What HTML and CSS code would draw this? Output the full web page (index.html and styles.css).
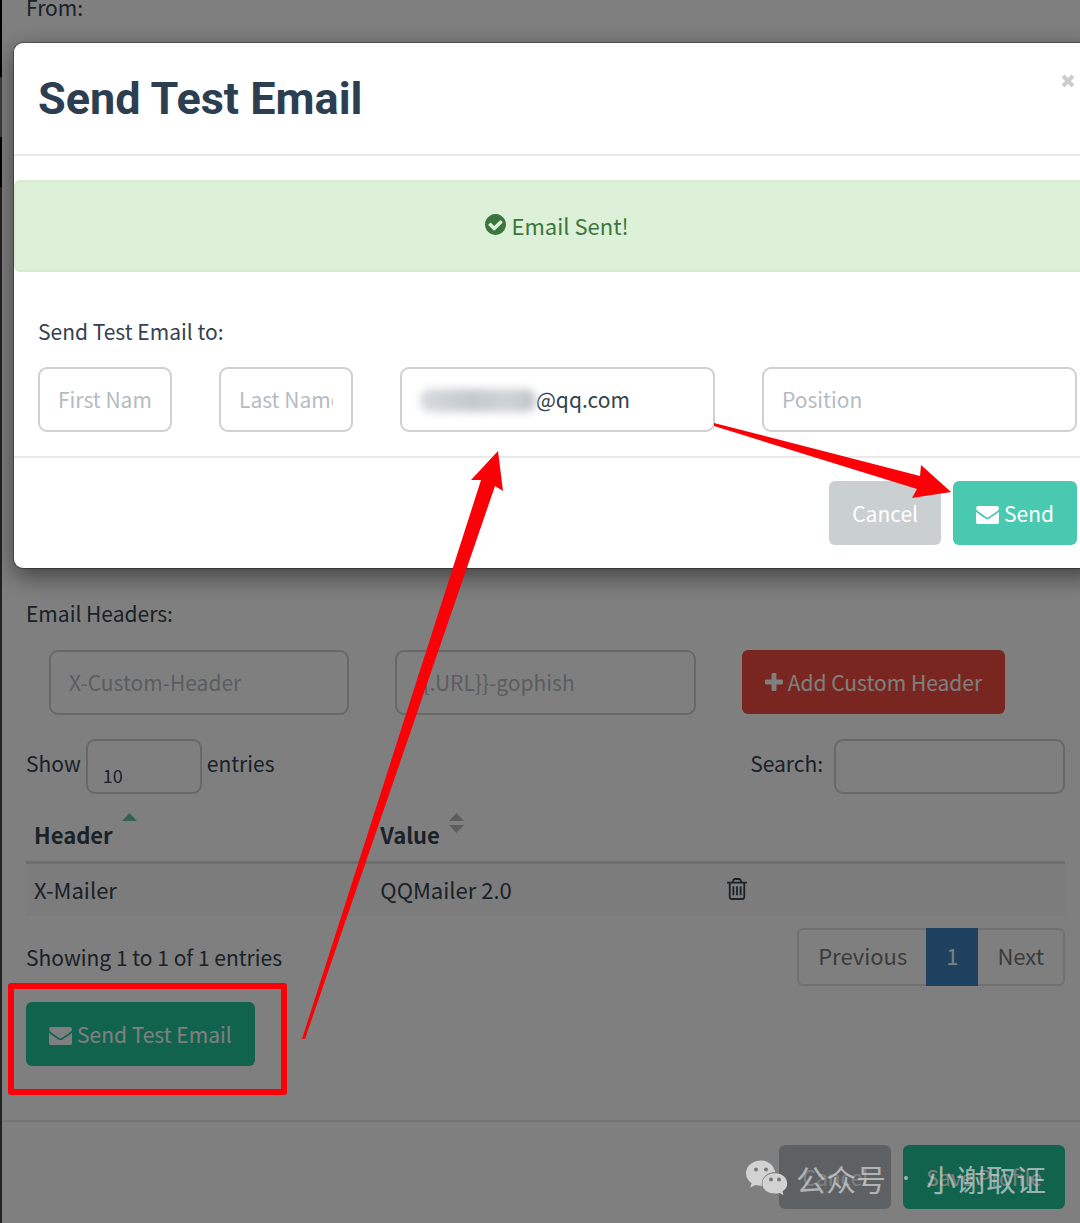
FILE: index.html
```html
<!DOCTYPE html>
<html lang="en">
<head>
    <meta charset="UTF-8">
    <meta name="viewport" content="width=device-width, initial-scale=1.0">
    <title>Send Test Email</title>
    <link rel="stylesheet" href="styles.css">
</head>
<body>
    <svg width="0" height="0" class="icon-defs">
        <symbol id="icon-envelope" viewBox="0 256 1792 1408">
            <path d="M1792 710v794q0 66-47 113t-113 47h-1472q-66 0-113-47t-47-113v-794q44 49 101 87 362 246 497 345 57 42 92.500 65.500t94.500 48 110 24.500h2q51 0 110-24.500t94.500-48 92.500-65.500q170-123 498-345 57-39 100-87zm0-294q0 79-49 151t-122 123q-376 261-468 325-10 7-42.500 31t-54 38.500-52 32.500-57.500 27-50 9h-2q-23 0-50-9t-57.500-27-52-32.500-54-38.500-42.500-31q-91-64-262-182.500t-205-142.500q-62-42-117-115.500t-55-136.500q0-78 41.500-130t118.500-52h1472q65 0 112.500 47t47.500 113z"/>
        </symbol>
    </svg>

    <main class="profile">
        <p class="from-label">From:</p>

        <form class="headers-form">
            <h2 class="group-label">Email Headers:</h2>
            <div class="header-row">
                <div class="col"><input type="text" class="form-control" placeholder="X-Custom-Header" aria-label="Header"></div>
                <div class="col"><input type="text" class="form-control" placeholder="{{.URL}}-gophish" aria-label="Value"></div>
                <div class="col">
                    <button type="button" class="btn btn-danger">
                        <svg class="icon-plus" viewBox="192 128 1408 1408"><path d="M1600 736v192q0 40-28 68t-68 28h-416v416q0 40-28 68t-68 28h-192q-40 0-68-28t-28-68v-416h-416q-40 0-68-28t-28-68v-192q0-40 28-68t68-28h416v-416q0-40 28-68t68-28h192q40 0 68 28t28 68v416h416q40 0 68 28t28 68z"/></svg>
                        Add Custom Header
                    </button>
                </div>
            </div>
        </form>

        <div class="table-tools">
            <label class="length">Show
                <select class="form-control small"><option>10</option></select>
                entries
            </label>
            <label class="search">Search: <input type="search" class="form-control small"></label>
        </div>

        <table class="headers-table">
            <thead>
                <tr>
                    <th>Header <svg class="sort" viewBox="0 0 15 20"><path class="active" d="M0 8L7.500 0L15 8z"/></svg></th>
                    <th>Value <svg class="sort" viewBox="0 0 15 20"><path d="M0 8L7.500 0L15 8zM0 12L7.500 20L15 12z"/></svg></th>
                    <th></th>
                </tr>
            </thead>
            <tbody>
                <tr>
                    <td>X-Mailer</td>
                    <td>QQMailer 2.0</td>
                    <td>
                        <button type="button" class="delete" aria-label="Delete">
                            <svg class="icon-trash" viewBox="192 128 1408 1536"><path d="M704 736v576q0 14-9 23t-23 9h-64q-14 0-23-9t-9-23v-576q0-14 9-23t23-9h64q14 0 23 9t9 23zm256 0v576q0 14-9 23t-23 9h-64q-14 0-23-9t-9-23v-576q0-14 9-23t23-9h64q14 0 23 9t9 23zm256 0v576q0 14-9 23t-23 9h-64q-14 0-23-9t-9-23v-576q0-14 9-23t23-9h64q14 0 23 9t9 23zm128 724v-948h-896v948q0 22 7 40.500t14.500 27 10.500 8.500h832q3 0 10.500-8.500t14.500-27 7-40.500zm-672-1076h448l-48-117q-7-9-17-11h-317q-10 2-17 11zm928 32v64q0 14-9 23t-23 9h-96v948q0 83-47 143.500t-113 60.500h-832q-66 0-113-58.500t-47-141.500v-952h-96q-14 0-23-9t-9-23v-64q0-14 9-23t23-9h309l70-167q15-37 54-63t79-26h320q40 0 79 26t54 63l70 167h309q14 0 23 9t9 23z"/></svg>
                        </button>
                    </td>
                </tr>
            </tbody>
        </table>

        <div class="table-footer">
            <span>Showing 1 to 1 of 1 entries</span>
            <nav class="pagination">
                <a href="#">Previous</a>
                <a href="#" class="current">1</a>
                <a href="#">Next</a>
            </nav>
        </div>

        <div class="test-email">
            <button type="button" class="btn btn-primary">
                <svg class="icon-envelope"><use href="#icon-envelope"/></svg>
                Send Test Email
            </button>
        </div>

        <footer class="profile-footer">
            <button type="button" class="btn btn-default">Cancel</button>
            <button type="button" class="btn btn-primary">Save Profile</button>
        </footer>
    </main>

    <div class="backdrop"></div>

    <div class="dialog" role="dialog" aria-labelledby="dialog-title">
        <div class="dialog-header">
            <h1 id="dialog-title">Send Test Email</h1>
            <button type="button" class="close" aria-label="Close">
                <svg viewBox="0 0 14 14"><path d="M2 2L12 12M12 2L2 12"/></svg>
            </button>
        </div>
        <div class="alert">
            <svg class="icon-check" viewBox="128 128 1536 1536"><path d="M1412 734q0-28-18-46l-91-90q-19-19-45-19t-45 19l-408 407-226-226q-19-19-45-19t-45 19l-91 90q-18 18-18 46 0 27 18 45l362 362q19 19 45 19 27 0 46-19l543-543q18-18 18-45zm252 162q0 209-103 385.500t-279.500 279.500-385.500 103-385.500-103-279.500-279.500-103-385.500 103-385.500 279.500-279.500 385.500-103 385.500 103 279.500 279.500 103 385.500z"/></svg>
            Email Sent!
        </div>
        <form class="recipient">
            <label for="first-name">Send Test Email to:</label>
            <div class="recipient-row">
                <input type="text" id="first-name" class="form-control" placeholder="First Name">
                <input type="text" class="form-control" placeholder="Last Name" aria-label="Last Name">
                <div class="email-field">
                    <input type="text" class="form-control" value="@qq.com" aria-label="Email">
                    <span class="masked"></span>
                </div>
                <input type="text" class="form-control" placeholder="Position" aria-label="Position">
            </div>
        </form>
        <div class="dialog-footer">
            <button type="button" class="btn btn-cancel">Cancel</button>
            <button type="button" class="btn btn-send">
                <svg class="icon-envelope"><use href="#icon-envelope"/></svg>
                Send
            </button>
        </div>
    </div>

    <!-- annotations -->
    <div class="highlight"></div>
    <svg class="arrows" viewBox="0 0 1080 1223">
        <path d="M302 1039L481 480L471 480L498 451L503 491L495 486L305 1039z"/>
        <path d="M714 423L920 476L921 465L951 492L912 498L917 489L714 426z"/>
    </svg>

    <div class="watermark">
        <svg viewBox="0 0 42 34">
            <path d="M15 0C6.500 0 0 5.600 0 12.800c0 4 2.100 7.500 5.600 9.900L4.300 27l5-2.600c1.800.5 3.700.8 5.700.8h1C14.500 18 20.500 12 29.300 11.600C28 5 22 0 15 0z"/>
            <path d="M29 12.800c-7.200 0-12.600 4.700-12.600 10.400S21.800 33 29 33c1.600 0 3-.2 4.300-.6l4.200 2-1-3.500c2.900-2 4.700-4.700 4.700-7.700 0-5.700-5-10.400-12.200-10.400z"/>
            <g class="eyes">
                <circle cx="10" cy="9" r="2"/><circle cx="20" cy="9" r="2"/>
                <circle cx="25" cy="19" r="2"/><circle cx="33" cy="19" r="2"/>
            </g>
        </svg>
        <span>公众号</span>
        <i class="dot"></i>
        <span>小谢取证</span>
    </div>
</body>
</html>
```
FILE: styles.css
```css
* {
    box-sizing: border-box;
}
body {
    position: relative;
    min-height: 100vh;
    margin: 0;
    overflow-x: hidden;
    font-family: "Source Sans Pro", "Noto Sans CJK SC", sans-serif;
    font-size: 21px;
    line-height: 32px;
    color: #34424f;
    background: white;
}
button,
input,
select {
    font: inherit;
    color: inherit;
}
svg {
    fill: currentColor;
    flex: none;
}
.icon-defs {
    position: absolute;
}

/* controls */
.form-control {
    display: block;
    width: 100%;
    height: 65px;
    padding: 0 18px 1px;
    border: 2px solid #d0d0d0;
    border-radius: 9px;
    background: transparent;
    outline: none;
    appearance: none;
}
.form-control::placeholder {
    color: #b5bbc0;
    opacity: 1;
}
.form-control.small {
    height: 55px;
    padding: 0 15px;
    font-size: 18px;
}
.btn {
    display: flex;
    align-items: center;
    gap: 5px;
    height: 64px;
    padding: 0 23px 1px;
    border: none;
    border-radius: 6px;
    color: white;
    white-space: nowrap;
    cursor: pointer;
}
.btn-danger {
    background: #f04c3e;
}
.btn-primary {
    background: #22c69c;
}
.btn-default {
    background: #bdc3c7;
}
.btn-cancel {
    background: #cacfd2;
}
.btn-send {
    background: #48c9b0;
}
.icon-envelope {
    width: 23px;
    height: 18px;
    margin-top: 4px;
}
.icon-plus {
    width: 18px;
    height: 18px;
}
.icon-check {
    width: 21px;
    height: 21px;
}
.icon-trash {
    display: block;
    width: 20px;
    height: 22px;
}

/* profile form behind the dialog */
.profile {
    padding: 0 15px 14px 26px;
    background: linear-gradient(#000 77px, #777 77px, #777 137px, #000 137px, #000 187px, #444 187px) no-repeat left top / 2px 100%;
}
.from-label {
    margin: 0;
    line-height: 14px;
}
.headers-form {
    margin-top: 583px;
}
.group-label {
    margin: 0 0 21px;
    font-size: 21px;
    font-weight: normal;
    line-height: 32px;
}
.header-row {
    display: grid;
    grid-template-columns: repeat(3, 1fr);
}
.col {
    padding: 0 23px;
}
.table-tools {
    display: flex;
    justify-content: space-between;
    margin-top: 24px;
}
.length,
.search {
    display: flex;
    align-items: flex-start;
    gap: 5px;
    line-height: 48px;
}
.length .form-control {
    width: 116px;
    padding-top: 10px;
}
.search {
    gap: 11px;
}
.search .form-control {
    width: 231px;
}
.headers-table {
    width: 100%;
    margin-top: 16px;
    table-layout: fixed;
    border-collapse: collapse;
    text-align: left;
    font-size: 22px;
}
.headers-table th {
    padding: 3px 8px 11px;
    border-bottom: 3px solid #ddd;
}
.headers-table td {
    padding: 9px 8px 11px;
    line-height: 32px;
}
.headers-table tbody tr {
    background: #f9f9f9;
}
.sort {
    width: 15px;
    height: 20px;
    margin-left: 4px;
    vertical-align: 11px;
    color: #bbb;
}
.sort .active {
    fill: #66c69c;
}
.delete {
    display: block;
    padding: 0;
    border: none;
    background: none;
}
.table-footer {
    display: flex;
    justify-content: space-between;
    align-items: center;
    margin-top: 12px;
}
.pagination {
    display: flex;
    height: 58px;
    border: 2px solid #e2e2e2;
    border-radius: 6px;
    font-size: 22px;
}
.pagination a {
    padding: 9px 19px;
    color: #777;
    text-decoration: none;
}
.pagination .current {
    margin: -2px 0;
    padding: 11px 20px;
    color: white;
    background: #3a82bd;
}
.test-email {
    padding: 16px 0 54px;
}
.profile-footer {
    display: flex;
    justify-content: flex-end;
    gap: 12px;
    margin: 0 -15px 0 -24px;
    padding: 23px 15px 0;
    border-top: 2px solid #e9e9e9;
}
.backdrop {
    position: absolute;
    inset: 0;
    background: rgba(0, 0, 0, 0.5);
}

/* dialog, runs off the right edge of the window */
.dialog {
    position: absolute;
    top: 43px;
    left: 14px;
    right: -20px;
    background: white;
    border-radius: 9px;
    box-shadow: 0 0 0 1px rgba(0, 0, 0, 0.3), 0 8px 24px rgba(0, 0, 0, 0.5);
}
.dialog-header {
    display: flex;
    justify-content: space-between;
    align-items: flex-start;
    padding: 31px 25px 30px 24px;
    border-bottom: 2px solid #e9e9e9;
}
.dialog-header h1 {
    margin: 0;
    font-family: Roboto, sans-serif;
    font-size: 45px;
    font-weight: bold;
    line-height: 50px;
    color: #2c3e50;
}
.close {
    padding: 0;
    border: none;
    background: none;
    line-height: 0;
}
.close svg {
    width: 14px;
    height: 14px;
    stroke: #ccc;
    stroke-width: 4;
}
.alert {
    display: flex;
    justify-content: center;
    align-items: center;
    gap: 5px;
    height: 92px;
    margin-top: 24px;
    padding-bottom: 3px;
    border: 2px solid #d9ead2;
    border-radius: 6px;
    font-size: 22px;
    color: #3c763d;
    background: #ddf0d8;
}
.recipient {
    padding: 43px 23px 24px 24px;
}
.recipient label {
    display: block;
    margin-bottom: 20px;
}
.recipient-row {
    display: grid;
    grid-template-columns: 134fr 134fr 315fr 315fr;
    gap: 47px;
}
.email-field {
    position: relative;
}
.email-field .form-control {
    padding-left: 134px;
}
.masked {
    position: absolute;
    top: 22px;
    left: 20px;
    width: 116px;
    height: 23px;
    border-radius: 10px;
    background: linear-gradient(90deg, #d8dbde, #c4c9ce 45%, #d0d4d8 75%, #bfc4c8);
    filter: blur(4px);
}
.dialog-footer {
    display: flex;
    justify-content: flex-end;
    gap: 12px;
    padding: 23px;
    border-top: 2px solid #e9e9e9;
}

/* annotations */
.highlight {
    position: absolute;
    top: 983px;
    left: 8px;
    width: 279px;
    height: 112px;
    border: 6px solid #fb0007;
    border-radius: 3px;
}
.arrows {
    position: absolute;
    top: 0;
    left: 0;
    width: 1080px;
    height: 1223px;
    fill: #fb0007;
    pointer-events: none;
}
.watermark {
    position: absolute;
    right: 34px;
    bottom: 28px;
    display: flex;
    align-items: center;
    font-size: 30px;
    color: rgba(215, 218, 218, 0.7);
}
.watermark svg {
    width: 42px;
    height: 35px;
    margin-right: 8px;
    color: #d2d2d2;
}
.watermark .eyes {
    fill: #777;
}
.watermark .dot {
    width: 4px;
    height: 4px;
    margin: 0 18px;
    border-radius: 50%;
    background: currentColor;
}
```
